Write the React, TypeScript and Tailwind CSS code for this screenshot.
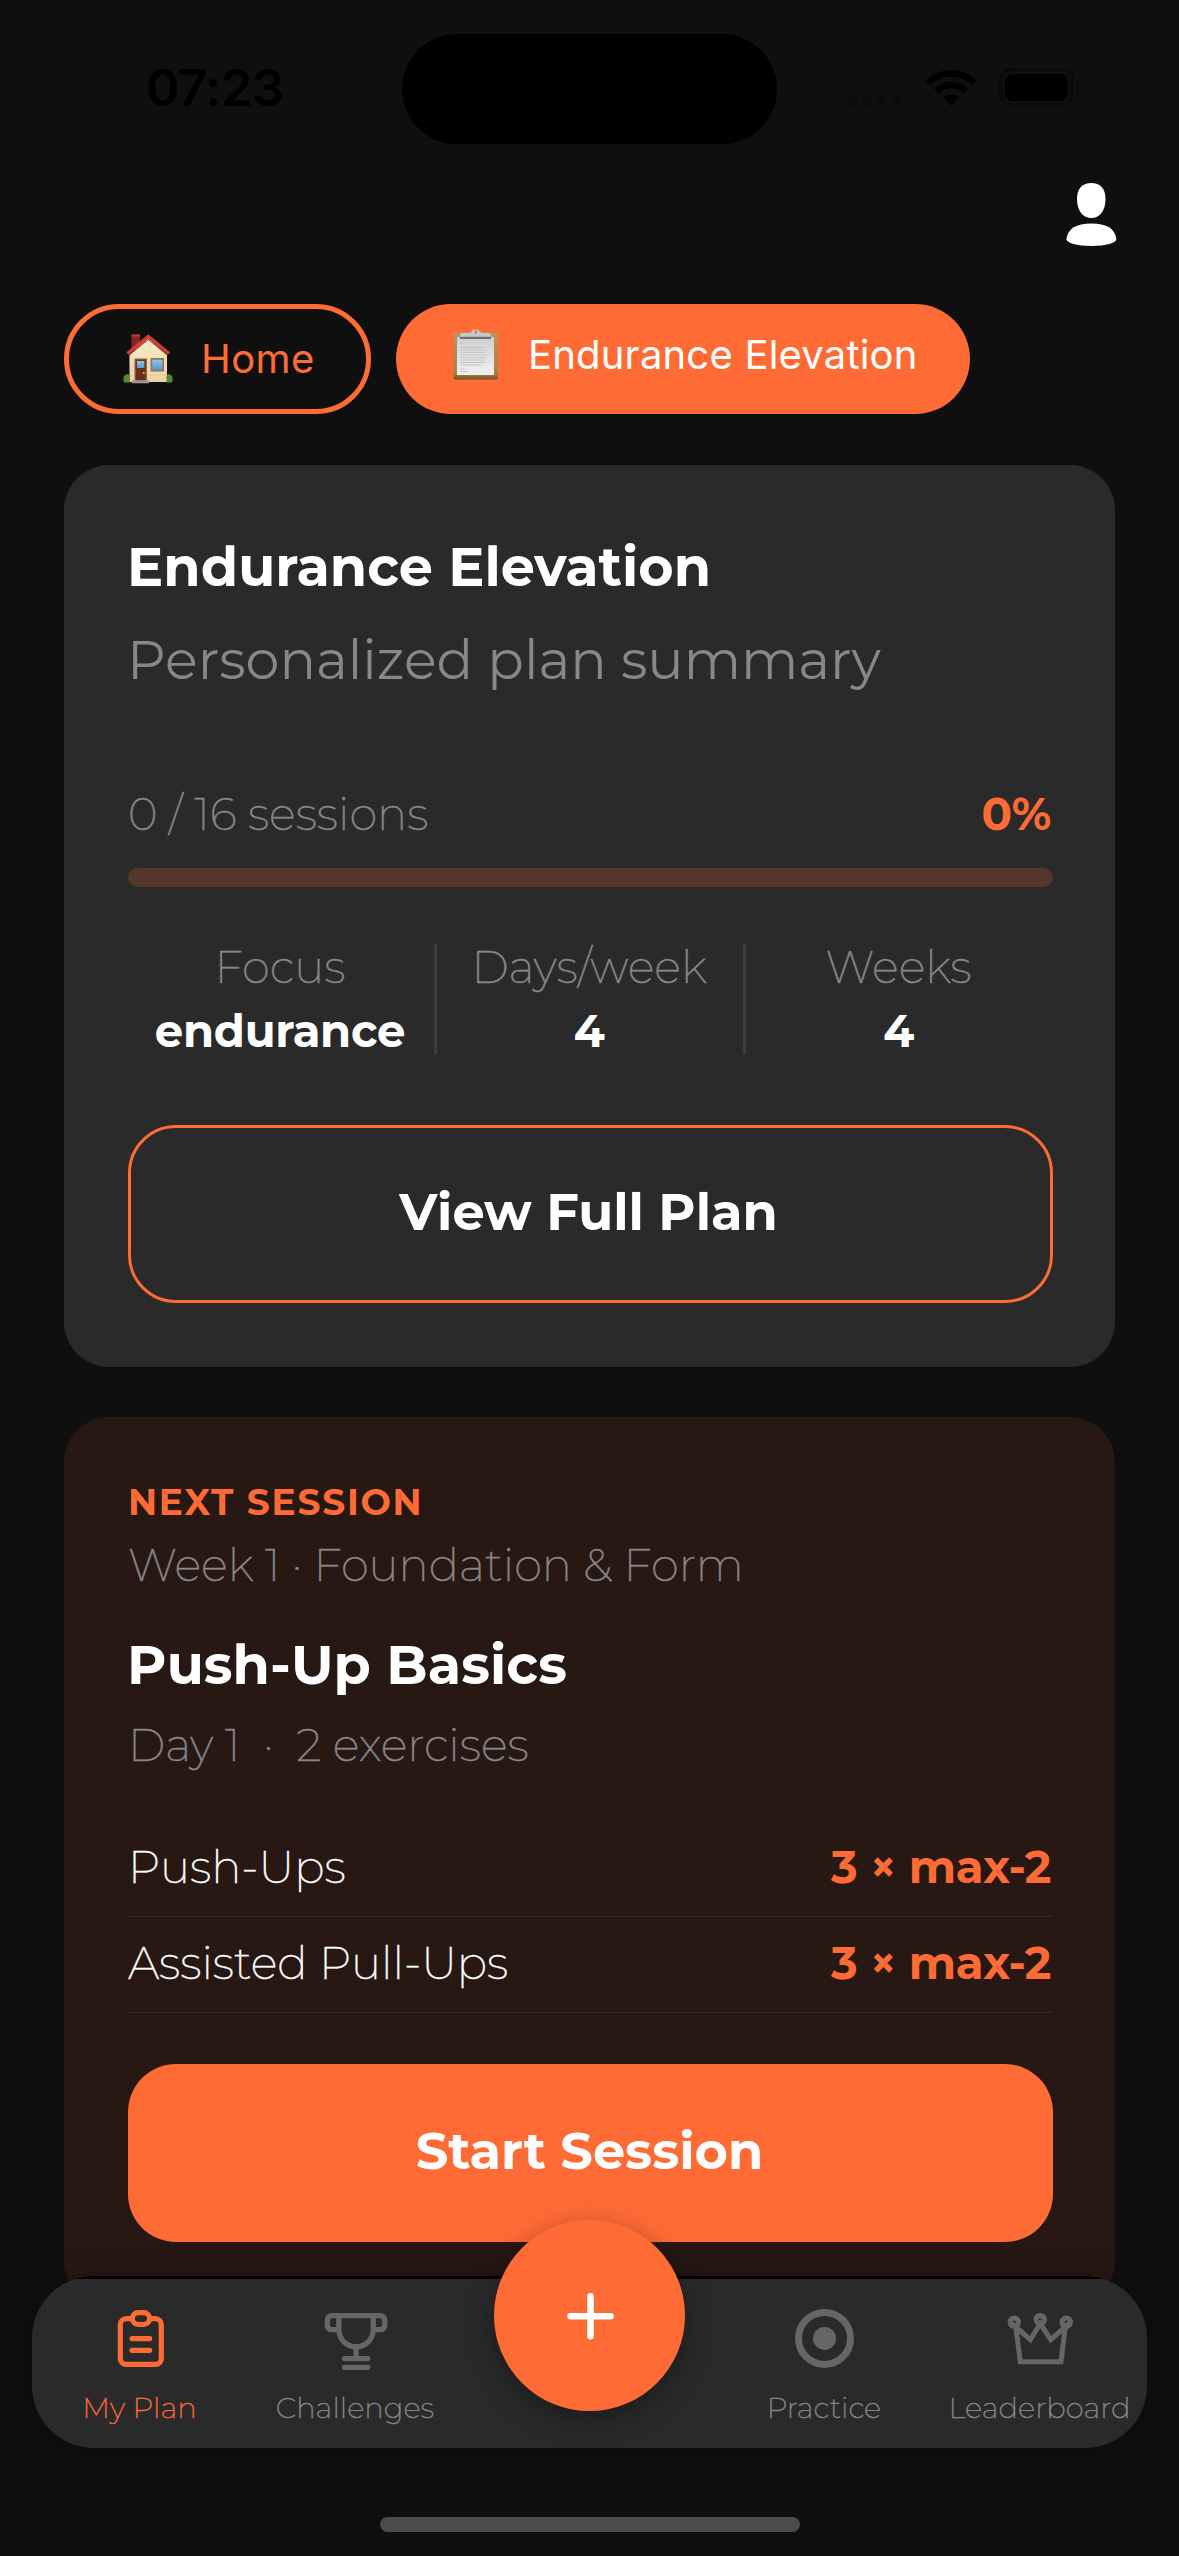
import type { ReactNode } from 'react';
import clsx from 'clsx';

const stats = [
  { label: 'Focus', value: 'endurance' },
  { label: 'Days/week', value: '4' },
  { label: 'Weeks', value: '4' },
];

const exercises = [
  { name: 'Push-Ups', volume: '3 × max-2' },
  { name: 'Assisted Pull-Ups', volume: '3 × max-2' },
];

// thin text on the dark panels, slightly thickened so it stays readable
const thin = 'font-extralight [-webkit-text-stroke:0.4px_currentColor]';

function StatusBar() {
  return (
    <div className="flex h-[178px] items-start pt-[34px]">
      <div className="w-[402px] pt-[24px] pl-[146px] font-['Inter',sans-serif] text-[51px] leading-[60px] font-semibold tracking-[-0.6px] text-black">
        07:23
      </div>
      <div className="h-[110px] w-[375px] rounded-full bg-black" />
      <div className="flex pt-[34px] pl-[70px]">
        <div className="mt-[28px] flex gap-[5px]">
          {[0, 1, 2, 3].map((dot) => (
            <span key={dot} className="size-[10px] rounded-full bg-[#0b0b0b]" />
          ))}
        </div>
        <svg className="ml-[24px]" width="51" height="40" viewBox="0 0 51 40">
          <path d="M0 12.6C14-1.6 36.500-1.6 50.500 12.600L46 17.200C34.500 5.700 16 5.700 4.600 17.200Z" />
          <path d="M8.500 20.800C18 11.300 32.500 11.300 42 20.800L37.400 25.400C30.500 18.600 20 18.600 13.100 25.400Z" />
          <path d="M17.500 29.500C21.800 25.400 28.700 25.400 33 29.500L25.300 37.800Z" />
        </svg>
        <svg className="ml-[22px]" width="82" height="40" viewBox="0 0 82 40">
          <rect x="1.500" y="1.500" width="72" height="35.500" rx="11" fill="none" stroke="#0a0a0a" strokeWidth="3" />
          <rect x="6" y="6" width="62.500" height="27" rx="7.500" />
          <path d="M77.500 13.500C81.500 15.500 81.500 24 77.500 26Z" fill="#0a0a0a" />
        </svg>
      </div>
    </div>
  );
}

function HouseIcon() {
  return (
    <svg width="50" height="50" viewBox="0 0 50 50">
      <defs>
        <linearGradient id="wall" x1="0" y1="0" x2="0" y2="1">
          <stop offset="0" stopColor="#fbecc8" />
          <stop offset="1" stopColor="#e9d3a2" />
        </linearGradient>
        <linearGradient id="glass" x1="0" y1="0" x2="0" y2="1">
          <stop offset="0" stopColor="#8cc6ee" />
          <stop offset="1" stopColor="#5598d0" />
        </linearGradient>
      </defs>
      <rect x="8.500" y="0.500" width="8.500" height="14" fill="#8e2420" />
      <rect x="8.500" y="0.500" width="8.500" height="2" fill="#b33a35" />
      <path d="M25 4L44 21V48H6.500V21Z" fill="url(#wall)" />
      <path d="M8 25H43M8 29H43M8 33H43M8 37H43M8 41H43" stroke="#dcc594" strokeWidth="0.500" />
      <path d="M4.500 19.500L25.300 2.500L46 19.500" fill="none" stroke="#d43a38" strokeWidth="3.400" />
      <path d="M5.500 21.500L25.300 5.500L45 21.500" fill="none" stroke="#8f2523" strokeWidth="0.900" />
      <rect x="11.500" y="24.500" width="12.500" height="22" fill="#8a6748" />
      <rect x="12.700" y="25.700" width="10" height="20.800" fill="#6b2f1d" />
      <rect x="14" y="27" width="7.300" height="7" fill="url(#glass)" />
      <circle cx="20.800" cy="39" r="1" fill="#f0c24a" />
      <rect x="9" y="46.300" width="17" height="3" fill="#9b9690" />
      <rect x="27.500" y="24" width="13.500" height="13.500" fill="#8f7758" />
      <rect x="29.300" y="25.800" width="10" height="10" fill="url(#glass)" />
      <path d="M0.500 44C0.500 40 6 39 6.800 42V48.500H1.500Q0 47 0.500 44Z" fill="#568a2c" />
      <path d="M49.500 44C49.500 40 44 39 43.500 42V48.500H48.500Q50 47 49.500 44Z" fill="#568a2c" />
    </svg>
  );
}

function NotesIcon() {
  return (
    <svg width="46" height="51" viewBox="0 0 46 51">
      <defs>
        <linearGradient id="board" x1="0" y1="0" x2="0" y2="1">
          <stop offset="0" stopColor="#bd9359" />
          <stop offset="0.880" stopColor="#a87f45" />
          <stop offset="1" stopColor="#744d20" />
        </linearGradient>
        <linearGradient id="sheet" x1="0" y1="0" x2="0" y2="1">
          <stop offset="0" stopColor="#cfd0d1" />
          <stop offset="1" stopColor="#f0f0f0" />
        </linearGradient>
      </defs>
      <rect x="0.500" y="3.500" width="44.500" height="47" rx="2" fill="url(#board)" />
      <rect x="4" y="8" width="37" height="38" fill="url(#sheet)" />
      <path d="M7 14.500H11M7 18.500H31M7 21H33M7 23.500H32M7 26H34M7 28.500H33M7 31H32M7 33.500H33M7 36H28M7 40H12M7 42.500H15" stroke="#c2c3c4" strokeWidth="0.900" />
      <path d="M7 9.500V7Q7 4 10 4H16Q19 3.500 20 0.500H25.500Q26.500 3.500 30 4H35Q38 4 38 7V9.500Z" fill="#c3c8cd" />
      <rect x="7" y="7.800" width="31" height="2.200" fill="#77706a" />
      <rect x="21.700" y="1.500" width="2.400" height="3" fill="#f0763f" />
    </svg>
  );
}

function PlanIcon() {
  return (
    <svg width="64" height="64" viewBox="0 0 64 64" fill="none" stroke="#ff6b35" strokeWidth="5.200" strokeLinecap="round">
      <rect x="12.300" y="10.700" width="41" height="45.700" rx="6" />
      <rect x="24.400" y="4.600" width="17.200" height="11.900" rx="5.900" fill="#2a2a2a" />
      <path d="M24 30.600H41.700M24 42.300H41.700" />
    </svg>
  );
}

function TrophyIcon() {
  return (
    <svg width="64" height="64" viewBox="0 0 64 64" fill="none" stroke="#666666" strokeWidth="5.300">
      <path d="M14.800 7.700H49.300V21C49.300 31.500 41.500 38.700 32.100 38.700S14.800 31.500 14.800 21Z" />
      <path d="M14.800 7.700H8.300Q3.300 7.700 3.300 12.700V16.700Q3.300 21.700 8.300 21.700H14.800" />
      <path d="M49.300 7.700H55.800Q60.800 7.700 60.800 12.700V16.700Q60.800 21.700 55.800 21.700H49.300" />
      <path d="M32.100 38.700V50" />
      <path d="M20.500 50.600H43.700M20.500 59.300H43.700" strokeLinecap="round" />
    </svg>
  );
}

function TargetIcon() {
  return (
    <svg width="64" height="64" viewBox="0 0 64 64">
      <circle cx="31.500" cy="30.400" r="26" fill="none" stroke="#666666" strokeWidth="7" />
      <circle cx="31.500" cy="30.400" r="11.500" fill="#666666" />
    </svg>
  );
}

function CrownIcon() {
  return (
    <svg width="80" height="64" viewBox="0 3 80 64" fill="none" stroke="#666666" strokeWidth="5">
      <path d="M15.800 22L20.300 56.700H61L65.300 22L50.600 34.700L40.300 18.500L30.300 34.700Z" />
      <circle cx="14.300" cy="17.300" r="4.200" />
      <circle cx="40.300" cy="14.600" r="4.200" />
      <circle cx="66.300" cy="17.300" r="4.200" />
    </svg>
  );
}

function TabItem({ icon, label, active }: { icon: ReactNode; label: string; active?: boolean }) {
  return (
    <div className="flex flex-col items-center">
      {icon}
      <span
        className={clsx(
          'mt-[18px] pr-px text-[29px] leading-[36px] whitespace-nowrap',
          thin,
          active ? 'text-[#ff6b35]' : 'text-[#888888]',
        )}
      >
        {label}
      </span>
    </div>
  );
}

function TabBar() {
  return (
    <div className="absolute top-[2276px] left-8 h-[172px] w-[1115px] overflow-hidden rounded-[62px] bg-[#2a2a2a] shadow-[0_0_30px_rgba(0,0,0,0.3)]">
      <div className="h-[3px] bg-black" />
      <div className="grid grid-cols-[216px_215px_253px_217px_214px] pt-[29px]">
        <TabItem icon={<PlanIcon />} label="My Plan" active />
        <TabItem icon={<TrophyIcon />} label="Challenges" />
        <div />
        <TabItem icon={<TargetIcon />} label="Practice" />
        <TabItem icon={<CrownIcon />} label="Leaderboard" />
      </div>
    </div>
  );
}

function PlanCard() {
  return (
    <section className="mt-[51px] flex h-[902px] flex-col rounded-[45px] bg-[#2a2a2a] p-16 pr-[62px]">
      <h1 className="-ml-px pt-px text-[54px] leading-[75px] font-bold text-white">Endurance Elevation</h1>
      <p className="-ml-px mt-[22px] text-[54px] leading-[66px] text-[#888888]">Personalized plan summary</p>
      <div className="mt-[93px] flex justify-between pr-[2px] text-[45px] leading-[55px]">
        <span className={clsx(thin, 'text-[#888888]')}>0 / 16 sessions</span>
        <span className="font-bold tracking-[-0.2px] text-[#ff6b35]">0%</span>
      </div>
      <div className="mt-[27px] h-[19px] rounded-full bg-[#55362b]" />
      <div className="mt-[57px] grid h-[110px] grid-cols-[306px_309px_310px]">
        {stats.map((stat, i) => (
          <div
            key={stat.label}
            className={clsx(
              'flex flex-col items-center pr-[2px] text-[45px] leading-[46px]',
              i > 0 && 'border-l-[3px] border-[#3d3d3d]',
            )}
          >
            <span className={clsx(thin, 'text-[#888888]')}>{stat.label}</span>
            <span className="mt-[18px] font-bold tracking-[-0.3px] text-white">{stat.value}</span>
          </div>
        ))}
      </div>
      <button className="mt-[71px] h-[178px] rounded-[48px] border-[3px] border-[#ff6b35] pr-[4px] pb-[3px] text-[51px] font-bold text-white">
        View Full Plan
      </button>
    </section>
  );
}

function NextSessionCard() {
  return (
    <section className="mt-[50px] flex h-[889px] flex-col rounded-[45px] bg-[#271814] p-16 pr-[62px]">
      <p className="text-[36px] leading-[42px] font-bold tracking-[1.75px] text-[#ff6b35]">NEXT SESSION</p>
      <p className={clsx(thin, 'mt-[14px] text-[45px] leading-[55px] text-[#888888]')}>
        Week 1 · Foundation &amp; Form
      </p>
      <h2 className="-ml-px mt-[40px] text-[54px] leading-[66px] font-bold tracking-[0.1px] text-white">Push-Up Basics</h2>
      <p className={clsx(thin, 'mt-[19px] text-[45px] leading-[55px] whitespace-pre text-[#888888]')}>
        {'Day 1  ·  2 exercises'}
      </p>
      <div className="mt-[49px]">
        {exercises.map((exercise) => (
          <div
            key={exercise.name}
            className="flex h-[96px] items-center justify-between border-b border-[#372925] pr-[2px] pb-[4px] text-[45px] leading-[55px]"
          >
            <span className={clsx(thin, 'text-white')}>{exercise.name}</span>
            <span className="font-bold tracking-[-0.3px] text-[#ff6b35]">{exercise.volume}</span>
          </div>
        ))}
      </div>
      <button className="mt-[51px] h-[178px] rounded-[48px] bg-[#ff6b35] pr-[2px] pb-[4px] text-[51px] font-bold text-white">
        Start Session
      </button>
    </section>
  );
}

export default function App() {
  return (
    <div className="relative h-[2556px] w-[1179px] overflow-hidden bg-[#0f0f0f] font-['Montserrat','Inter',sans-serif]">
      <StatusBar />

      <div className="flex h-[126px] justify-end pt-[5px] pr-[62px]">
        <svg width="51" height="64" viewBox="0 0 51 64" fill="#ffffff">
          <path d="M25.300 0C34 0 39.500 5.500 39.500 16C39.500 28 33.500 35 25.300 35S11 28 11 16C11 5.500 16.600 0 25.300 0Z" />
          <path d="M0.400 56C2 45.500 10 40.500 25.400 40.500S48.800 45.500 50.400 56C50.400 60 40 63 25.400 63S0.400 60 0.400 56Z" />
        </svg>
      </div>

      <main className="pr-16 pl-16">
        <div className="flex gap-[25px] font-['Inter',sans-serif] text-[40px] leading-[48px]">
          <button className="flex h-[110px] w-[307px] rounded-full border-[5px] border-[#ff6b35] pt-[25px] pl-[54px] text-[#ff6b35]">
            <HouseIcon />
            <span className="mt-[1px] ml-[28px] tracking-[0.4px]">Home</span>
          </button>
          <button className="flex h-[110px] w-[574px] rounded-full bg-[#ff6b35] pt-[25px] pl-[57px] text-white">
            <NotesIcon />
            <span className="mt-[2px] ml-[29px] tracking-[0.2px]">Endurance Elevation</span>
          </button>
        </div>
        <PlanCard />
        <NextSessionCard />
      </main>

      <TabBar />
      <button className="absolute top-[2220px] left-[494px] flex size-[191px] items-center justify-center rounded-full bg-[#ff6b35] shadow-[0_8px_28px_rgba(0,0,0,0.35)]">
        <svg width="48" height="48" viewBox="0 0 48 48" stroke="#ffffff" strokeWidth="6.600" strokeLinecap="round">
          <path d="M24.500 4.300V44.300M4.500 24.300H44.500" />
        </svg>
      </button>
      <div className="absolute bottom-[24px] left-[380px] h-[15px] w-[420px] rounded-full bg-[#4b4b4b]" />
    </div>
  );
}
